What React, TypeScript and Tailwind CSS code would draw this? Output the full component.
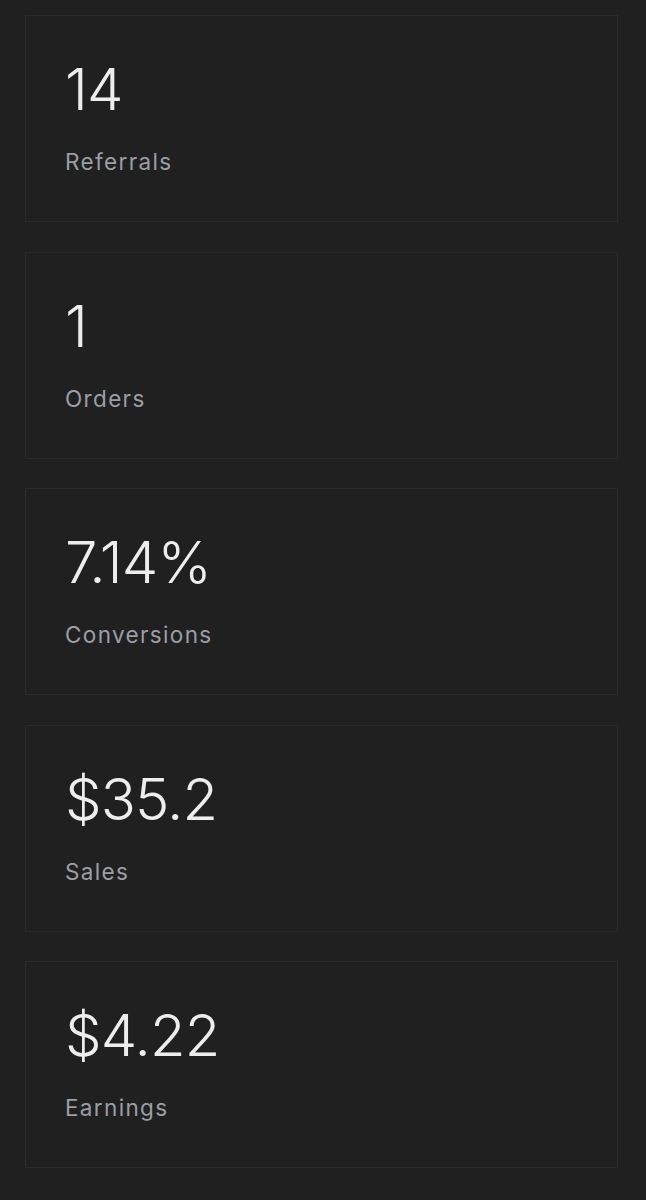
const stats = [
  { value: "14", label: "Referrals" },
  { value: "1", label: "Orders" },
  { value: "7.14%", label: "Conversions" },
  { value: "$35.2", label: "Sales" },
  { value: "$4.22", label: "Earnings" },
];

function StatCard({ value, label }: { value: string; label: string }) {
  return (
    <div className="h-[207px] border border-[#2a2a2a] px-[39px] pt-[37px]">
      <div className="text-[58px] font-light leading-[72px] tracking-[-0.015em] text-[#ededed]">
        {value}
      </div>
      <div className="mt-[22px] text-[22.5px] font-normal leading-[30px] tracking-[0.06em] text-[#9b9ea5]">
        {label}
      </div>
    </div>
  );
}

export default function App() {
  return (
    <div
      className="min-h-[1200px] bg-[#202020] pl-[25px] pr-[28px] pt-[15px]"
      style={{ fontFamily: "Inter, 'Noto Sans', sans-serif" }}
    >
      <div className="flex flex-col gap-[29.5px]">
        {stats.map((s) => (
          <StatCard key={s.label} value={s.value} label={s.label} />
        ))}
      </div>
    </div>
  );
}
